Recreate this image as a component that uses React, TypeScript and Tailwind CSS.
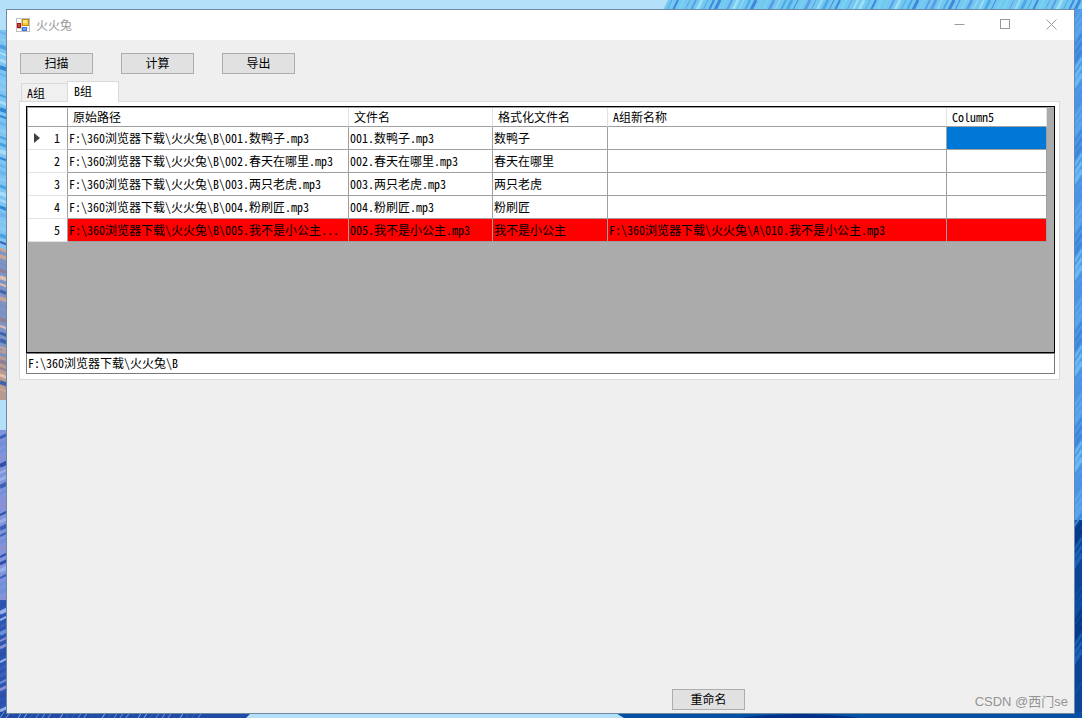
import { useState } from "react";

const mono = "font-['Noto_Sans_Mono_CJK_SC','Noto_Sans_CJK_SC','Liberation_Mono',monospace]";

const rows = [
    { path: "F:\\360浏览器下载\\火火兔\\B\\001.数鸭子.mp3", file: "001.数鸭子.mp3", name: "数鸭子", target: "" },
    { path: "F:\\360浏览器下载\\火火兔\\B\\002.春天在哪里.mp3", file: "002.春天在哪里.mp3", name: "春天在哪里", target: "" },
    { path: "F:\\360浏览器下载\\火火兔\\B\\003.两只老虎.mp3", file: "003.两只老虎.mp3", name: "两只老虎", target: "" },
    { path: "F:\\360浏览器下载\\火火兔\\B\\004.粉刷匠.mp3", file: "004.粉刷匠.mp3", name: "粉刷匠", target: "" },
    {
        path: "F:\\360浏览器下载\\火火兔\\B\\005.我不是小公主...",
        file: "005.我不是小公主.mp3",
        name: "我不是小公主",
        target: "F:\\360浏览器下载\\火火兔\\A\\010.我不是小公主.mp3",
    },
];

const leftColors = ["#6db4ee", "#2f86d2", "#a9dcf8", "#4aa0e0", "#8ccaf3"];
const warmColors = ["#7c8fc0", "#c9a595", "#3f62ad", "#e0bfae", "#8e7f95"];
const deepColors = ["#6f8fd8", "#3d5fb8", "#98b0e8", "#2e4fa8", "#8a8fd0"];
const topColors = ["#4aa8e6", "#9be0f6", "#5b9ce8", "#74d2f2", "#3f86dc"];
const rightColors = ["#5aa6ee", "#3f86de", "#6cb8f4", "#4a92e8"];
const navyColors = ["#0b4fa4", "#063a86", "#1a62b8", "#0a459a"];

const Wallpaper = () => (
    <svg
        className="absolute inset-0 w-full h-full"
        viewBox="0 0 1082 718"
        preserveAspectRatio="none"
        aria-hidden="true"
    >
        <rect width="1082" height="718" fill="#b5e0fa" />
        <rect y="30" width="8" height="250" fill="#7cc4f2" />
        <rect y="250" width="8" height="100" fill="#7e94c6" />
        <rect y="350" width="8" height="50" fill="#b99a92" />
        <rect y="430" width="8" height="190" fill="#8093dc" />
        <rect y="600" width="8" height="118" fill="#2c55b4" />
        {Array.from({ length: 98 }, (_, i) => {
            const y = 32 + i * 7;
            if (y > 395 && y < 432) return null;
            const set = y < 240 ? leftColors : y < 400 ? warmColors : deepColors;
            const slope = y < 400 ? 3 : -4;
            return (
                <path
                    key={i}
                    d={`M0 ${y}L8 ${y + slope}`}
                    stroke={set[(i * 3 + (i % 4)) % 5]}
                    strokeWidth={2 + (i % 3)}
                />
            );
        })}
        <path d="M668 0H1082V12H662Z" fill="#74c8f0" />
        {Array.from({ length: 70 }, (_, i) => (
            <path
                key={i}
                d={`M${672 + i * 6} 0L${666 + i * 6} 12`}
                stroke={topColors[(i * 3 + (i % 4)) % 5]}
                strokeWidth={1 + (i % 3)}
            />
        ))}
        <rect x="1073" y="9" width="9" height="520" fill="#4f9ae8" />
        <rect x="1073" y="520" width="9" height="198" fill="#0a4598" />
        {Array.from({ length: 85 }, (_, i) => {
            const y = 14 + i * 8;
            const set = y < 525 ? rightColors : navyColors;
            return (
                <path
                    key={i}
                    d={`M1073 ${y + 10}L1082 ${y - 4}`}
                    stroke={set[(i * 3 + (i % 3)) % 4]}
                    strokeWidth={2 + (i % 3)}
                />
            );
        })}
        <path d="M0 712H252L246 718H0Z" fill="#1f4ba6" />
        {Array.from({ length: 34 }, (_, i) => (
            <path
                key={i}
                d={`M${i * 6} 718L${i * 6 + 4} 712`}
                stroke={deepColors[(i * 3 + (i % 4)) % 5]}
                strokeWidth="1"
            />
        ))}
        <path d="M614 712H1082V718H624Z" fill="#0650a4" />
        <path d="M740 718Q800 710 860 718" fill="#02308a" />
    </svg>
);

const AppIcon = () => (
    <svg className="w-[14px] h-[14px]" viewBox="0 0 14 14" aria-hidden="true">
        <rect x="0.5" y="0.5" width="13" height="13" fill="#fff" stroke="#bdbdbd" />
        <path d="M5.5 0V14M0 10.5H14" stroke="#d0d0d0" />
        <rect x="1.5" y="5.5" width="3" height="4" fill="#d8403a" stroke="#a3150f" />
        <rect x="6.500" y="1.500" width="6" height="6" fill="#f8c936" stroke="#c08c0a" />
        <rect x="7" y="2" width="4" height="3" fill="#fde58a" />
        <rect x="6.500" y="9.500" width="4" height="3" fill="#6ea2f2" stroke="#3a72d8" />
    </svg>
);

const FormButton = ({ text }: { text: string }) => (
    <button
        type="button"
        className="w-[73px] h-[21px] pb-[2px] flex items-center justify-center bg-[#e1e1e1] border border-[#adadad]"
    >
        {text}
    </button>
);

const App = () => {
    const [tab, setTab] = useState("B");
    const [folder, setFolder] = useState("F:\\360浏览器下载\\火火兔\\B");

    return (
        <div className="relative min-h-screen flex pt-[9px] pr-[7px] pb-1 pl-[6px]">
            <Wallpaper />
            <div className={`relative flex-1 min-w-0 flex flex-col bg-[#efefef] border border-[#6c8aa3] text-xs text-black ${mono}`}>
                <header className="h-[30px] pb-px flex items-center bg-white text-[#999999]">
                    <div className="flex-1 flex items-center gap-[6px] pl-[9px]">
                        <AppIcon />
                        <h1>火火兔</h1>
                    </div>
                    <button type="button" aria-label="最小化" className="w-[46px] h-full flex items-center justify-center">
                        <svg className="w-[11px] h-[11px]" viewBox="0 0 11 11" stroke="#999">
                            <path d="M0.5 5.5H10.5" />
                        </svg>
                    </button>
                    <button type="button" aria-label="最大化" className="w-[46px] h-full flex items-center justify-center">
                        <svg className="w-[11px] h-[11px]" viewBox="0 0 11 11" stroke="#999" fill="none">
                            <rect x="0.5" y="0.5" width="9" height="9" />
                        </svg>
                    </button>
                    <button type="button" aria-label="关闭" className="w-[46px] h-full flex items-center justify-center">
                        <svg className="w-[11px] h-[11px]" viewBox="0 0 11 11" stroke="#999">
                            <path d="M0.5 0.5L10.5 10.5M10.5 0.5L0.5 10.5" />
                        </svg>
                    </button>
                </header>

                <main className="flex-1 flex flex-col pt-[13px] pb-[3px] pl-3 pr-[14px]">
                    <div className="flex gap-7 pl-px">
                        <FormButton text="扫描" />
                        <FormButton text="计算" />
                        <FormButton text="导出" />
                    </div>

                    <div role="tablist" className="mt-[7px] -mb-px pl-[2px] flex items-end relative">
                        <button
                            type="button"
                            role="tab"
                            aria-selected={tab === "A"}
                            onClick={() => setTab("A")}
                            className="w-[46px] h-[19px] pl-[5px] text-left border border-r-0 border-[#d9d9d9] bg-[#f0f0f0]"
                        >
                            A组
                        </button>
                        <button
                            type="button"
                            role="tab"
                            aria-selected={tab === "B"}
                            onClick={() => setTab("B")}
                            className="w-[52px] h-[21px] pl-[6px] pb-[2px] text-left border border-b-0 border-[#d9d9d9] bg-white"
                        >
                            B组
                        </button>
                    </div>

                    <section role="tabpanel" className="bg-white border border-[#dcdcdc] pt-1 pr-1 pb-[5px] pl-[6px]">
                        <div className="h-[247px] bg-[#ababab] border border-black pr-[7px]">
                            <table className="w-full table-fixed border-separate border-spacing-0 border-t border-l border-[#a0a0a0] leading-4 whitespace-nowrap">
                                <colgroup>
                                    <col className="w-[40px]" />
                                    <col className="w-[281px]" />
                                    <col className="w-[144px]" />
                                    <col className="w-[115px]" />
                                    <col />
                                    <col className="w-[100px]" />
                                </colgroup>
                                <thead>
                                    <tr className="h-[19px] bg-white text-left">
                                        <td className="p-0 border-r border-b border-[#a0a0a0]"></td>
                                        {["原始路径", "文件名", "格式化文件名", "A组新名称", "Column5"].map((title) => (
                                            <th
                                                key={title}
                                                scope="col"
                                                className="p-0 pl-[5px] font-normal border-r border-b border-r-[#e2e2e2] border-b-[#a0a0a0]"
                                            >
                                                {title}
                                            </th>
                                        ))}
                                    </tr>
                                </thead>
                                <tbody>
                                    {rows.map((row, i) => (
                                        <tr key={row.file} className={row.target ? "h-[23px] bg-[#ff0000]" : "h-[23px] bg-white"}>
                                            <th scope="row" className="p-0 bg-white font-normal border-r border-b border-r-[#a0a0a0] border-b-[#e2e2e2]">
                                                <div className="flex items-center justify-between pl-[6px] pr-[7px]">
                                                    <svg className="w-[6px] h-[10px]" viewBox="0 0 6 10" fill="#404040">
                                                        {i === 0 && <path d="M0 0L6 5L0 10Z" />}
                                                    </svg>
                                                    {i + 1}
                                                </div>
                                            </th>
                                            {[row.path, row.file, row.name, row.target].map((text, c) => (
                                                <td
                                                    key={c}
                                                    className="p-0 px-px overflow-hidden text-ellipsis border-r border-b border-[#a0a0a0]"
                                                >
                                                    {text}
                                                </td>
                                            ))}
                                            <td className={i === 0 ? "p-0 bg-[#0078d7] border-r border-b border-[#a0a0a0]" : "p-0 border-r border-b border-[#a0a0a0]"}></td>
                                        </tr>
                                    ))}
                                </tbody>
                            </table>
                        </div>
                        <input
                            type="text"
                            aria-label="文件夹"
                            value={folder}
                            onChange={(e) => setFolder(e.target.value)}
                            className="block w-full h-[21px] px-px pb-[3px] bg-white border border-[#7a7a7a] focus:outline-none"
                        />
                    </section>

                    <div className="mt-auto flex justify-end pr-[315px]">
                        <FormButton text="重命名" />
                    </div>
                </main>

                <span className="absolute right-[6px] bottom-px text-[13px] leading-5 text-[#949494] font-['Liberation_Sans','Noto_Sans_CJK_SC',sans-serif]">
                    CSDN @西门se
                </span>
            </div>
        </div>
    );
};

export default App;
